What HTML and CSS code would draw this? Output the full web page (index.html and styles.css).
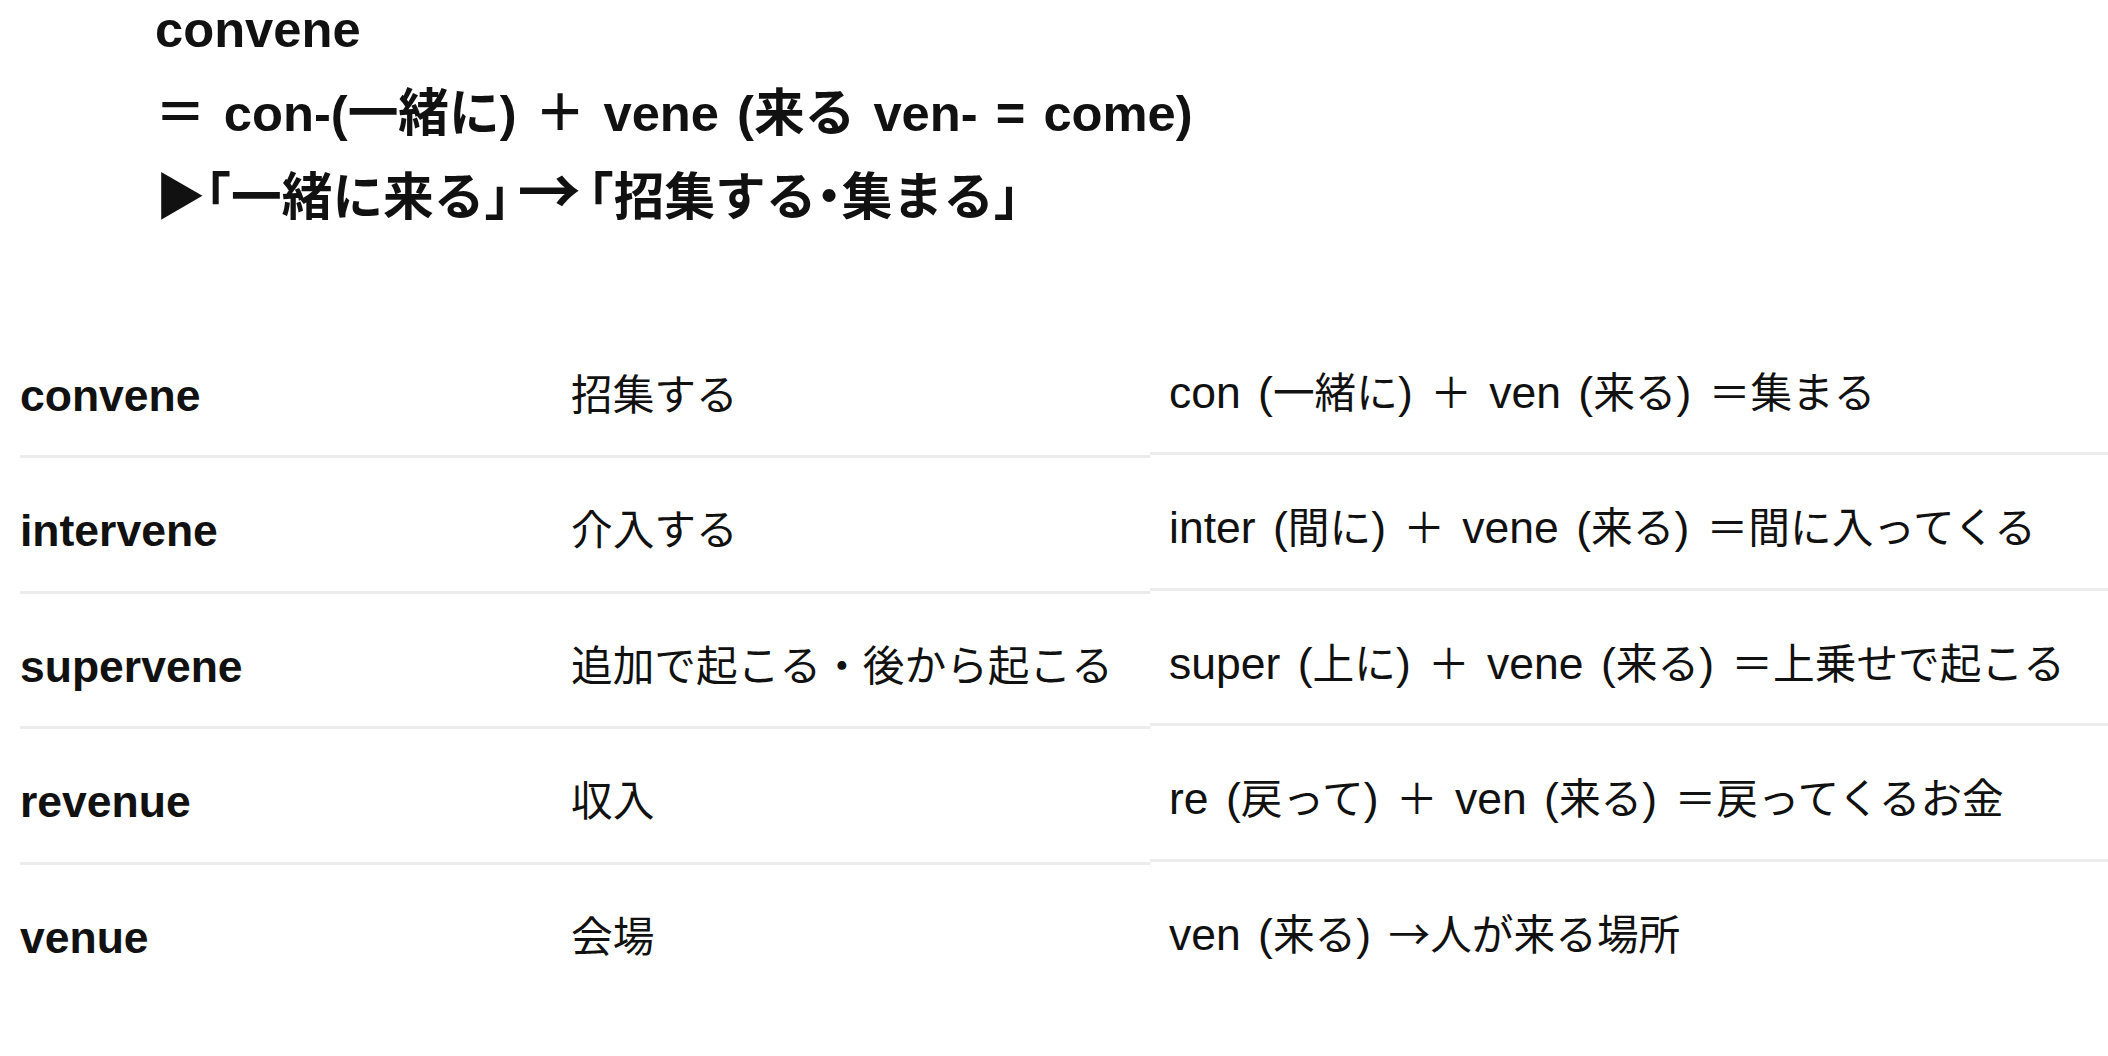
FILE: index.html
```html
<!DOCTYPE html>
<html lang="ja">
<head>
<meta charset="utf-8">
<title>convene</title>
<link rel="stylesheet" href="styles.css">
</head>
<body>
<div class="note">
  <p>convene</p>
  <p class="formula">＝ con-(一緒に) ＋ vene (来る ven- = come)</p>
  <p class="gist">▶「一緒に来る」<span class="arr">→</span>「招集する・集まる」</p>
</div>
<div class="vocab">
  <div class="cell term">convene</div>
  <div class="cell mean">招集する</div>
  <div class="cell ety">con (<span class="ja">一緒に</span>) <span class="ja">＋</span> ven (<span class="ja">来る</span>) <span class="ja">＝集まる</span></div>

  <div class="cell term">intervene</div>
  <div class="cell mean">介入する</div>
  <div class="cell ety">inter (<span class="ja">間に</span>) <span class="ja">＋</span> vene (<span class="ja">来る</span>) <span class="ja">＝間に入ってくる</span></div>

  <div class="cell term">supervene</div>
  <div class="cell mean">追加で起こる・後から起こる</div>
  <div class="cell ety">super (<span class="ja">上に</span>) <span class="ja">＋</span> vene (<span class="ja">来る</span>) <span class="ja">＝上乗せで起こる</span></div>

  <div class="cell term">revenue</div>
  <div class="cell mean">収入</div>
  <div class="cell ety">re (<span class="ja">戻って</span>) <span class="ja">＋</span> ven (<span class="ja">来る</span>) <span class="ja">＝戻ってくるお金</span></div>

  <div class="cell term last">venue</div>
  <div class="cell mean last">会場</div>
  <div class="cell ety last">ven (<span class="ja">来る</span>) <span class="ja arr">→</span><span class="ja">人が来る場所</span></div>
</div>
</body>
</html>
```
FILE: styles.css
```css
html, body {
  margin: 0;
  background: #ffffff;
}
body {
  color: #111111;
  font-family: "Liberation Sans", "Noto Sans CJK JP", sans-serif;
}
.note {
  margin-top: -12px;
  padding-left: 155px;
  font-size: 50.7px;
  font-weight: 700;
  line-height: 84px;
}
.note p {
  margin: 0;
  white-space: nowrap;
}
.formula {
  word-spacing: 4px;
}
.gist {
  font-feature-settings: "halt";
}
.arr {
  font-family: "Noto Sans CJK JP", sans-serif;
  line-height: 0;
}
.gist .arr {
  font-size: 1.25em;
  margin: 0 0.12em;
}
.vocab {
  display: grid;
  grid-template-columns: 551px 579px 1fr;
  margin: 82.5px 0 0 20px;
  font-size: 44.5px;
}
.cell {
  box-sizing: border-box;
  height: 135.5px;
  padding-top: 13px;
  line-height: 119.5px;
  border-bottom: 3px solid #ececec;
  white-space: nowrap;
}
.term {
  font-weight: 700;
}
.mean {
  font-size: 41.7px;
}
.ety {
  margin: -3px 0 3px;
  padding-left: 19px;
  word-spacing: 5px;
}
.ja {
  font-size: 41.7px;
  line-height: 0;
}
.cell.last {
  border-bottom-color: transparent;
}
```
